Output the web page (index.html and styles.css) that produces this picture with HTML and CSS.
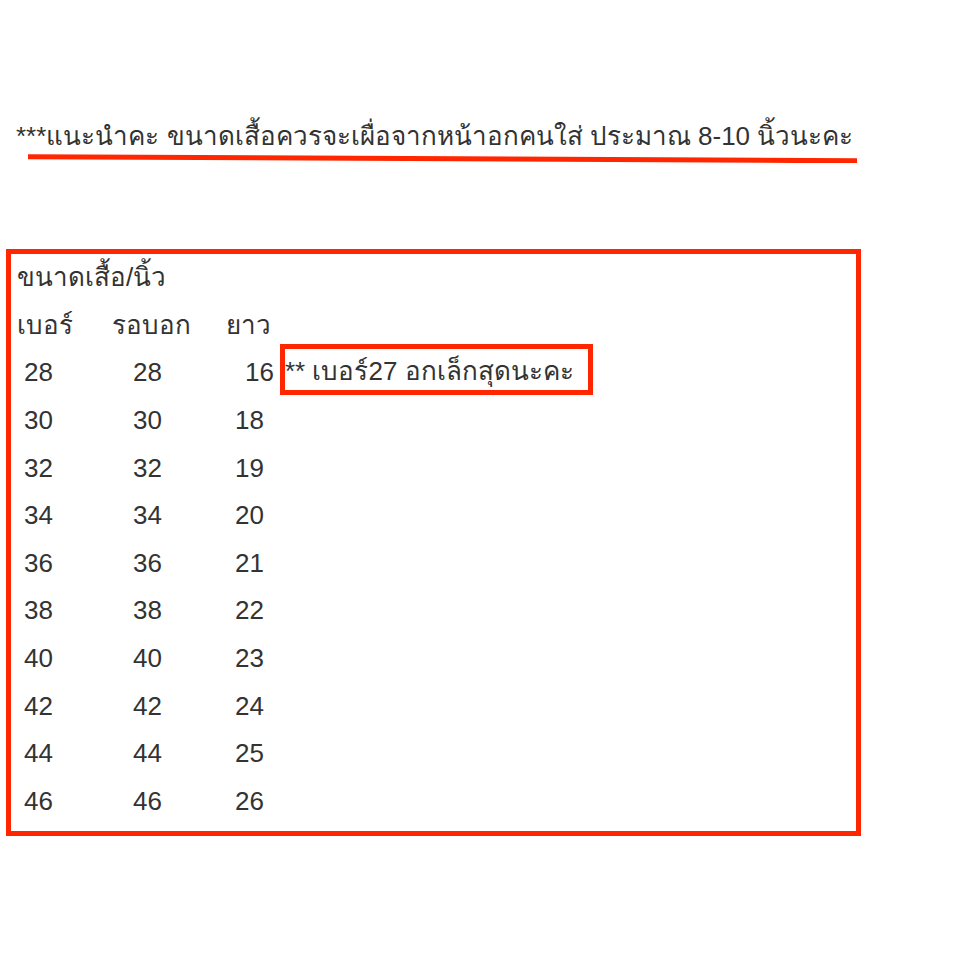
FILE: index.html
```html
<!DOCTYPE html>
<html lang="th">
<head>
<meta charset="utf-8">
<title>ขนาดเสื้อ</title>
<link rel="stylesheet" href="styles.css">
</head>
<body>
<p class="advice">***แนะนำคะ ขนาดเสื้อควรจะเผื่อจากหน้าอกคนใส่ ประมาณ 8-10 นิ้วนะคะ</p>
<svg class="underline" width="962" height="12" viewBox="0 0 962 12" aria-hidden="true">
  <line x1="28" y1="5.7" x2="857" y2="9.8" stroke="#ff2600" stroke-width="5"/>
</svg>
<div class="size-box">
  <div class="row title"><span class="c-all">ขนาดเสื้อ/นิ้ว</span></div>
  <div class="row head"><span class="c1">เบอร์</span><span class="c2">รอบอก</span><span class="c3">ยาว</span></div>
  <div class="row num first"><span class="c1">28</span><span class="c2">28</span><span class="c3">16</span><span class="note">** เบอร์27 อกเล็กสุดนะคะ</span></div>
  <div class="row num"><span class="c1">30</span><span class="c2">30</span><span class="c3">18</span></div>
  <div class="row num"><span class="c1">32</span><span class="c2">32</span><span class="c3">19</span></div>
  <div class="row num"><span class="c1">34</span><span class="c2">34</span><span class="c3">20</span></div>
  <div class="row num"><span class="c1">36</span><span class="c2">36</span><span class="c3">21</span></div>
  <div class="row num"><span class="c1">38</span><span class="c2">38</span><span class="c3">22</span></div>
  <div class="row num"><span class="c1">40</span><span class="c2">40</span><span class="c3">23</span></div>
  <div class="row num"><span class="c1">42</span><span class="c2">42</span><span class="c3">24</span></div>
  <div class="row num"><span class="c1">44</span><span class="c2">44</span><span class="c3">25</span></div>
  <div class="row num"><span class="c1">46</span><span class="c2">46</span><span class="c3">26</span></div>
</div>
</body>
</html>
```
FILE: styles.css
```css
html, body {
  margin: 0;
  padding: 0;
  background: #ffffff;
}
body {
  font-family: "Liberation Sans", "Noto Sans", sans-serif;
  color: #333333;
  width: 962px;
  height: 962px;
  overflow: hidden;
}
.advice {
  margin: 121px 0 0 16px;
  font-size: 26px;
  line-height: 30px;
  height: 30px;
  white-space: nowrap;
}
.underline {
  display: block;
}
.size-box {
  margin: 86px 0 0 6px;
  width: 855px;
  height: 587px;
  box-sizing: border-box;
  border: 5px solid #ff2600;
  padding: 0 0 5px 6px;
  font-size: 26px;
}
.row {
  display: grid;
  grid-template-columns: 95px 114px 54px auto;
  align-items: start;
  height: 47.64px;
  line-height: 47.64px;
  white-space: nowrap;
}
.title .c-all {
  grid-column: 1 / 5;
}
.num .c1 { padding-left: 7px; }
.num .c2 { padding-left: 21px; }
.num .c3 { padding-left: 9px; }
.num.first .c3 { padding-left: 19px; }
.note {
  justify-self: start;
  margin-top: -5px;
  height: 51px;
  box-sizing: border-box;
  border: 5px solid #ff2600;
  padding: 4px 14px 0 0;
  line-height: 36px;
}
```
